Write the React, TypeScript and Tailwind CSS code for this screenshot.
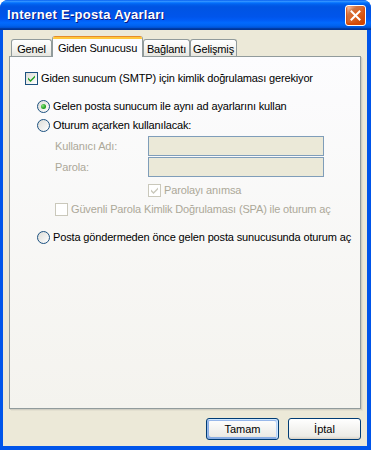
import React from "react";

const font = { fontFamily: '"Liberation Sans", Arial, sans-serif' };

function Check({ checked, disabled }: { checked?: boolean; disabled?: boolean }) {
  return (
    <div
      className={
        "w-[13px] h-[13px] shrink-0 border flex items-center justify-center " +
        (disabled
          ? "border-[#cac8bb] bg-white"
          : "border-[#1c5180] bg-[linear-gradient(135deg,#dcdcd7,#ffffff)]")
      }
    >
      {checked && (
        <svg width="11" height="11" viewBox="0 0 11 11">
          <polygon
            points="2,4.5 4.5,7 9,2.5 9,4.5 4.5,9 2,6.5"
            fill={disabled ? "#cac8bb" : "#21a121"}
          />
        </svg>
      )}
    </div>
  );
}

function Radio({ checked }: { checked?: boolean }) {
  return (
    <div className="w-[13px] h-[13px] shrink-0 rounded-full border border-[#1c5180] bg-[linear-gradient(135deg,#dcdcd7,#ffffff)] flex items-center justify-center">
      {checked && (
        <div className="w-[5px] h-[5px] rounded-full bg-[radial-gradient(circle_at_35%_35%,#8ae37f,#21a121_60%,#129e00)]" />
      )}
    </div>
  );
}

function Tab({ label, w, active }: { label: string; w: string; active?: boolean }) {
  if (active) {
    return (
      <div
        className={
          w +
          " h-[21px] mb-[-1px] relative z-10 flex flex-col rounded-t-[3px] overflow-hidden border-x border-[#919b9c] bg-[#fcfcfe]"
        }
      >
        <div className="h-[1px] bg-[#e68b2c] shrink-0" />
        <div className="h-[2px] bg-[#ffc73c] shrink-0" />
        <div className="flex-1 flex items-start justify-center pt-[1px] text-[11px] tracking-[-0.15px] text-black">{label}</div>
      </div>
    );
  }
  return (
    <div
      className={
        w +
        " h-[17px] flex items-center justify-center rounded-t-[3px] border border-b-0 border-[#919b9c] bg-[linear-gradient(to_bottom,#ffffff,#f3f3ef_60%,#e6e5df)] text-[11px] tracking-[-0.15px] text-black pt-[2px]"
      }
    >
      {label}
    </div>
  );
}

export default function App() {
  return (
    <div
      className="w-[371px] h-[450px] flex flex-col bg-[#0055ea] rounded-t-[8px] overflow-hidden"
      style={font}
    >
      {/* Title bar */}
      <div className="h-[30px] shrink-0 flex items-center justify-between pl-[7px] pr-[5px] bg-[linear-gradient(to_bottom,#0058ee_0%,#3593ff_4%,#288eff_6%,#127dff_8%,#036ffc_10%,#0262ee_14%,#0057e5_20%,#0054e3_24%,#0055eb_56%,#005bf5_66%,#026afe_76%,#0062ef_86%,#0052d6_92%,#0040ab_94%,#003092_100%)]">
        <div
          className="text-white font-bold text-[13px] tracking-[0.3px]"
          style={{ fontFamily: '"Liberation Sans", Arial, sans-serif', textShadow: "1px 1px 0 #0a1883" }}
        >
          Internet E-posta Ayarları
        </div>
        <div className="w-[21px] h-[21px] rounded-[3px] border border-white bg-[radial-gradient(circle_at_90%_90%,#cc4600_0%,#dc6527_55%,#cd7546_70%,#ffccb2_90%,#ffffff_100%)] shadow-[inset_0_-1px_2px_1px_#da4600] flex items-center justify-center">
          <svg width="11" height="11" viewBox="0 0 11 11">
            <path d="M1.5 1.5 L9.5 9.5 M9.5 1.5 L1.5 9.5" stroke="white" strokeWidth="2" strokeLinecap="square" />
          </svg>
        </div>
      </div>

      {/* Body */}
      <div className="flex-1 flex flex-col ml-[3px] mr-[4px] mb-[4px] bg-[#ece9d8] pt-[6px] px-[6px] pb-[6px]">
        {/* Tabs */}
        <div className="h-[20px] shrink-0 flex items-end pl-[2px]">
          <Tab label="Genel" w="w-[41px]" />
          <Tab label="Giden Sunucusu" w="w-[91px]" active />
          <Tab label="Bağlantı" w="w-[47px]" />
          <Tab label="Gelişmiş" w="w-[47px]" />
        </div>

        {/* Panel */}
        <div className="flex-1 flex flex-col border border-[#919b9c] bg-[linear-gradient(to_bottom,#fcfcfe,#f4f3ee)] shadow-[1px_1px_0_#d0cec3,2px_2px_0_#e3e0d0] pl-[15px] text-[11px] tracking-[-0.15px] text-black">
          <div className="mt-[15px] h-[13px] flex items-center">
            <Check checked />
            <span className="ml-[3px]">Giden sunucum (SMTP) için kimlik doğrulaması gerekiyor</span>
          </div>
          <div className="mt-[15px] h-[13px] flex items-center pl-[12px]">
            <Radio checked />
            <span className="ml-[3px]">Gelen posta sunucum ile aynı ad ayarlarını kullan</span>
          </div>
          <div className="mt-[6px] h-[13px] flex items-center pl-[12px]">
            <Radio />
            <span className="ml-[3px]">Oturum açarken kullanılacak:</span>
          </div>
          <div className="mt-[4px] h-[20px] flex items-center pl-[30px]">
            <span className="w-[93px] text-[#aca899]">Kullanıcı Adı:</span>
            <div className="w-[176px] h-[20px] border border-[#7f9db9] bg-[#ebe9d8]" />
          </div>
          <div className="mt-[1px] h-[20px] flex items-center pl-[30px]">
            <span className="w-[93px] text-[#aca899]">Parola:</span>
            <div className="w-[176px] h-[20px] border border-[#7f9db9] bg-[#ebe9d8]" />
          </div>
          <div className="mt-[7px] h-[13px] flex items-center pl-[123px]">
            <Check checked disabled />
            <span className="ml-[3px] text-[#aca899]">Parolayı anımsa</span>
          </div>
          <div className="mt-[6px] h-[13px] flex items-center pl-[30px]">
            <Check disabled />
            <span className="ml-[3px] text-[#aca899]">Güvenli Parola Kimlik Doğrulaması (SPA) ile oturum aç</span>
          </div>
          <div className="mt-[15px] h-[13px] flex items-center pl-[12px]">
            <Radio />
            <span className="ml-[3px]">Posta göndermeden önce gelen posta sunucusunda oturum aç</span>
          </div>
        </div>

        {/* Buttons */}
        <div className="mt-[9px] h-[22px] shrink-0 flex justify-end gap-[9px]">
          <button className="w-[73px] h-[22px] rounded-[3px] border border-[#003c74] bg-[linear-gradient(to_bottom,#ffffff,#ecebe6_86%,#d6d0c5)] shadow-[inset_-1px_1px_#cee7ff,inset_1px_2px_#98b8ea,inset_-2px_2px_#bcd4f6,inset_1px_-1px_#89ade4,inset_2px_-2px_#89ade4] text-[11px] text-black">
            Tamam
          </button>
          <button className="w-[73px] h-[22px] rounded-[3px] border border-[#003c74] bg-[linear-gradient(to_bottom,#ffffff,#ecebe6_86%,#d6d0c5)] text-[11px] text-black">
            İptal
          </button>
        </div>
      </div>
    </div>
  );
}
